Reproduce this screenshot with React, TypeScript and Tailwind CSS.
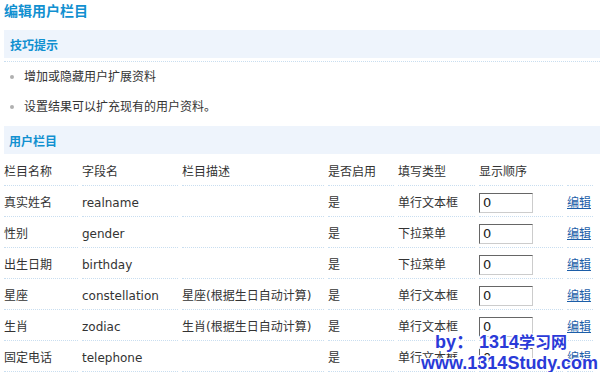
import React from "react";

type Row = {
  name: string;
  field: string;
  desc: string;
  enabled: string;
  type: string;
  order: string;
};

const rows: Row[] = [
  { name: "真实姓名", field: "realname", desc: "", enabled: "是", type: "单行文本框", order: "0" },
  { name: "性别", field: "gender", desc: "", enabled: "是", type: "下拉菜单", order: "0" },
  { name: "出生日期", field: "birthday", desc: "", enabled: "是", type: "下拉菜单", order: "0" },
  { name: "星座", field: "constellation", desc: "星座(根据生日自动计算)", enabled: "是", type: "单行文本框", order: "0" },
  { name: "生肖", field: "zodiac", desc: "生肖(根据生日自动计算)", enabled: "是", type: "单行文本框", order: "0" },
  { name: "固定电话", field: "telephone", desc: "", enabled: "是", type: "单行文本框", order: "0" },
];

const cell = "border-b border-dotted border-[#c9def0] h-[31px] flex items-center pt-[3px] shrink-0";

function TableRow({ children }: { children: React.ReactNode }) {
  return <div className="flex gap-[4px]">{children}</div>;
}

export default function App() {
  return (
    <div className="relative w-[600px] h-[372px] overflow-hidden bg-white text-[12px] text-[#333] font-['DejaVu_Sans','Noto_Sans_CJK_SC',sans-serif]">
      <div className="h-[30px] leading-[20px] pl-[4px] text-[14px] font-bold text-[#1190d0] font-['Noto_Sans_CJK_SC',sans-serif]">
        编辑用户栏目
      </div>
      <div className="ml-[4px] h-[28px] bg-[#eef4fc] pl-[6px] pt-[1px] leading-[28px] text-[12px] font-bold text-[#1190d0] font-['Noto_Sans_CJK_SC',sans-serif]">
        技巧提示
      </div>
      <div className="ml-[4px] mt-[3px] border-t border-dotted border-[#c9def0]">
        <div className="flex items-center h-[30px] pl-[6px]">
          <span className="w-[4px] h-[4px] rounded-full bg-[#b0b0b0] mr-[10px]" />
          <span>增加或隐藏用户扩展资料</span>
        </div>
        <div className="flex items-center h-[30px] pl-[6px]">
          <span className="w-[4px] h-[4px] rounded-full bg-[#b0b0b0] mr-[10px]" />
          <span>设置结果可以扩充现有的用户资料。</span>
        </div>
      </div>
      <div className="ml-[4px] mt-[4px] h-[28px] bg-[#eef4fc] pl-[5px] pt-[1px] leading-[28px] text-[12px] font-bold text-[#1190d0] font-['Noto_Sans_CJK_SC',sans-serif]">
        用户栏目
      </div>
      <div className="ml-[4px] mt-[1px]">
        <TableRow>
          <div className={`${cell} w-[74px]`}>栏目名称</div>
          <div className={`${cell} w-[96px]`}>字段名</div>
          <div className={`${cell} w-[142px]`}>栏目描述</div>
          <div className={`${cell} w-[66px]`}>是否启用</div>
          <div className={`${cell} w-[77px]`}>填写类型</div>
          <div className={`${cell} w-[84px]`}>显示顺序</div>
          <div className={`${cell} w-[26px]`}></div>
        </TableRow>
        {rows.map((r) => (
          <TableRow key={r.field}>
            <div className={`${cell} w-[74px]`}>{r.name}</div>
            <div className={`${cell} w-[96px]`}>{r.field}</div>
            <div className={`${cell} w-[142px] whitespace-nowrap`}>{r.desc}</div>
            <div className={`${cell} w-[66px]`}>{r.enabled}</div>
            <div className={`${cell} w-[77px]`}>{r.type}</div>
            <div className={`${cell} w-[84px]`}>
              <div className="w-[54px] h-[20px] border border-t-[#666] border-l-[#666] border-r-[#ccc] border-b-[#ccc] pl-[3px] leading-[18px] text-[13px] text-[#222] bg-white">
                {r.order}
              </div>
            </div>
            <div className={`${cell} w-[26px]`}>
              <a className="underline text-[#1c5ea8] whitespace-nowrap" href="#">
                编辑
              </a>
            </div>
          </TableRow>
        ))}
      </div>
      <div className="absolute left-[421px] top-[332px] text-[18px] leading-[20px] font-bold text-[#2a3ad8] font-['Liberation_Sans','Noto_Sans_CJK_SC',sans-serif] [text-shadow:1px_1px_0_#fff,-1px_-1px_0_#fff,1px_-1px_0_#fff,-1px_1px_0_#fff,2px_2px_0_#fff]">
        <div className="pl-[14px] whitespace-nowrap">
          by：&nbsp;1314<span className="text-[16px]">学习网</span>
        </div>
        <div className="whitespace-nowrap">www.1314Study.com</div>
      </div>
    </div>
  );
}
